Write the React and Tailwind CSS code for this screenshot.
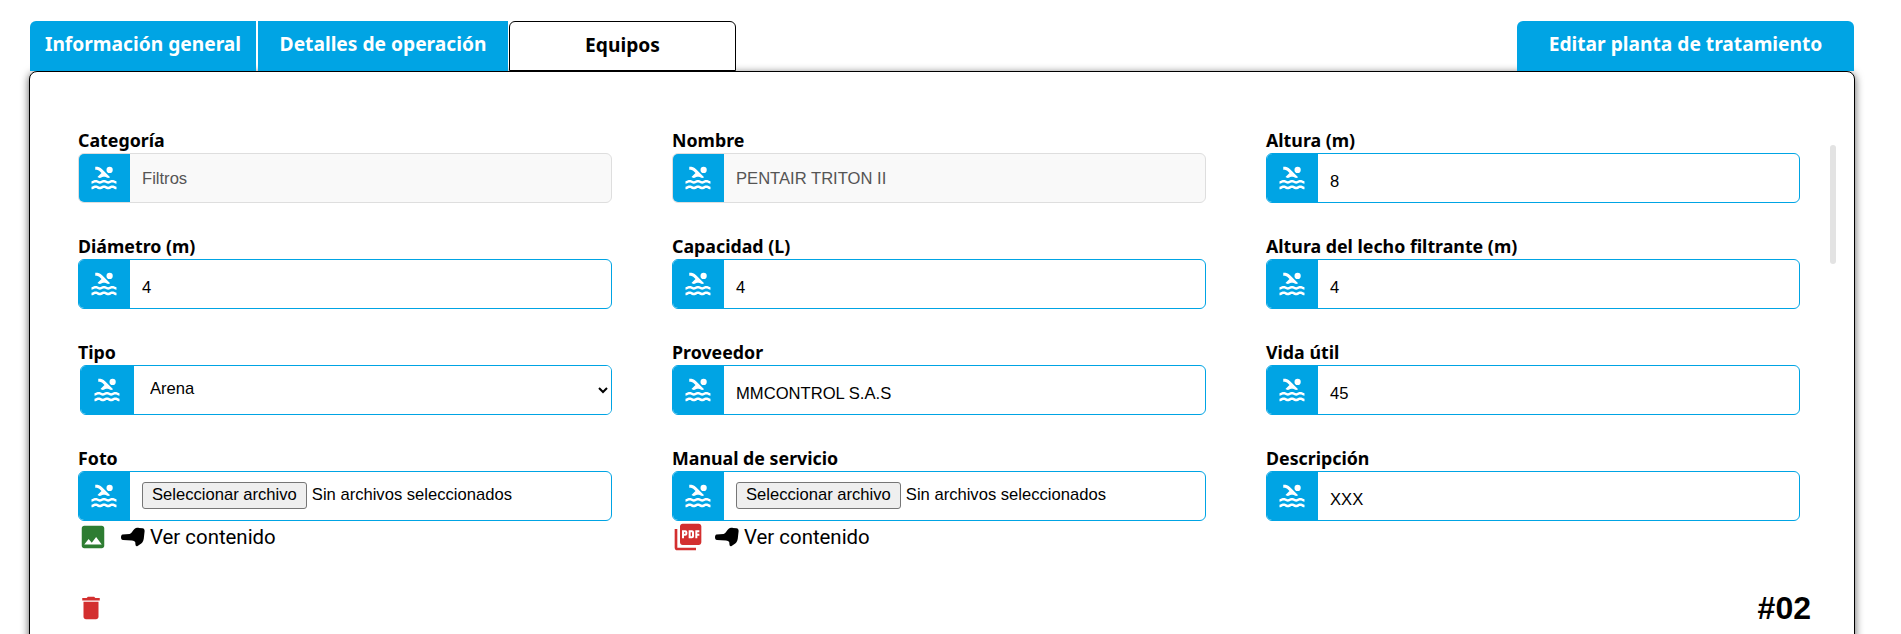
import { MdPool, MdImage, MdPictureAsPdf, MdDelete } from "react-icons/md";

const heading = "font-['Noto_Sans','Open_Sans',sans-serif]";
const body = "font-['Liberation_Sans',Arial,sans-serif]";
const labelClass = `${heading} h-[24px] text-[17.8px] leading-[22px] font-bold text-black`;

function PointIcon() {
  return (
    <svg width="24" height="20" viewBox="0 0 24 20" className="mr-[5px] shrink-0" fill="#000">
      <path d="M1.5 7.4 L8.6 7 C10.6 6.4 11.6 4 13.2 2.3 C14.4 1 16.4 0.7 18 0.9 L21.5 1.2 C23 1.4 23.8 2.6 23.6 4.2 L22.8 11.5 C22.4 14.6 21 16.6 18.8 17.4 L16.6 19 C15.4 19.6 14.6 19 14.5 17.8 L14.2 15 C13.6 14 12.4 13.6 11 13.4 L2 13 C0.6 12.9 0 11.6 0 10.2 C0 8.8 0.5 7.5 1.5 7.4 Z" />
    </svg>
  );
}

function Field({ label, value, disabled }) {
  return (
    <div className="flex flex-col">
      <label className={labelClass}>{label}</label>
      <div className={`flex h-[50px] overflow-hidden rounded-[6px] border ${disabled ? "border-[#dedede] bg-[#f9f9f9]" : "border-[#00a4e4] bg-white"}`}>
        <span className="-my-px -ml-px flex w-[52px] shrink-0 items-center justify-center bg-[#00a4e4] text-white">
          <MdPool size={30} />
        </span>
        <span className={`${body} flex items-center pl-[12px] text-[16.6px] ${disabled ? "pt-[2px] text-[#555]" : "pt-[9px] text-black"}`}>{value}</span>
      </div>
    </div>
  );
}

function SelectField({ label, value }) {
  return (
    <div className="flex flex-col">
      <label className={labelClass}>{label}</label>
      <div className="ml-[2px] flex h-[50px] overflow-hidden rounded-[6px] border border-[#00a4e4] bg-white">
        <span className="-my-px -ml-px flex w-[54px] shrink-0 items-center justify-center bg-[#00a4e4] text-white">
          <MdPool size={30} />
        </span>
        <select defaultValue={value} className={`${body} w-full bg-white pb-[3px] pl-[12px] text-[16.6px] text-black outline-none`}>
          <option>{value}</option>
        </select>
      </div>
    </div>
  );
}

function FileField({ label, icon }) {
  return (
    <div className="flex flex-col">
      <label className={labelClass}>{label}</label>
      <div className="flex h-[50px] items-stretch overflow-hidden rounded-[6px] border border-[#00a4e4] bg-white">
        <span className="-my-px -ml-px flex w-[52px] shrink-0 items-center justify-center bg-[#00a4e4] text-white">
          <MdPool size={30} />
        </span>
        <div className={`${body} flex items-center pb-[2px] pl-[12px] text-[16.6px] text-black`}>
          <button type="button" className="h-[27px] rounded-[3px] border border-[#767676] bg-[#efefef] px-[9px]">Seleccionar archivo</button>
          <span className="ml-[5px]">Sin archivos seleccionados</span>
        </div>
      </div>
      <div className="flex h-[32px] items-center font-['Roboto',sans-serif] text-[20.4px] text-black">
        <span className="flex w-[43px] justify-start">{icon}</span>
        <PointIcon />
        <span>Ver contenido</span>
      </div>
    </div>
  );
}

export default function App() {
  return (
    <div className="h-[634px] w-full overflow-hidden bg-white">
      <div className={`${heading} relative z-10 flex pt-[21px] pl-[30px] text-[19.2px] leading-[46px] font-bold`}>
        <button type="button" className="h-[50px] w-[226px] rounded-tl-[6px] bg-[#00a4e4] pb-[4px] text-white">Información general</button>
        <button type="button" className="ml-[2px] h-[50px] w-[250px] bg-[#00a4e4] pb-[4px] text-white">Detalles de operación</button>
        <button type="button" className="ml-[1px] h-[50px] w-[227px] rounded-t-[6px] border border-black bg-white pb-[4px] text-black">Equipos</button>
        <button type="button" className="ml-[781px] h-[50px] w-[337px] rounded-t-[6px] bg-[#00a4e4] pb-[4px] text-white">Editar planta de tratamiento</button>
      </div>
      <div className="relative ml-[29px] h-[700px] w-[1826px] rounded-[8px] border border-black bg-white pt-[57px] pl-[48px] shadow-[0_2px_8px_rgba(0,0,0,0.65)]">
        <div className="absolute top-[73px] right-[18px] h-[119px] w-[6px] rounded-[3px] bg-[#e3e3e3]" />
        <div className="grid w-[1722px] grid-cols-3 gap-x-[60px] gap-y-[32px]">
          <Field label="Categoría" value="Filtros" disabled />
          <Field label="Nombre" value="PENTAIR TRITON II" disabled />
          <Field label="Altura (m)" value="8" />
          <Field label="Diámetro (m)" value="4" />
          <Field label="Capacidad (L)" value="4" />
          <Field label="Altura del lecho filtrante (m)" value="4" />
          <SelectField label="Tipo" value="Arena" />
          <Field label="Proveedor" value="MMCONTROL S.A.S" />
          <Field label="Vida útil" value="45" />
          <FileField label="Foto" icon={<MdImage size={30} className="text-[#2e7d32]" />} />
          <FileField label="Manual de servicio" icon={<MdPictureAsPdf size={32} className="text-[#d32f2f]" />} />
          <Field label="Descripción" value="XXX" />
        </div>
        <div className="mt-[31px] flex w-[1722px] items-center justify-between">
          <MdDelete size={30} className="-ml-[2px] text-[#d32f2f]" />
          <span className={`${body} mr-[-11px] text-[32px] font-bold text-black`}>#02</span>
        </div>
      </div>
    </div>
  );
}
